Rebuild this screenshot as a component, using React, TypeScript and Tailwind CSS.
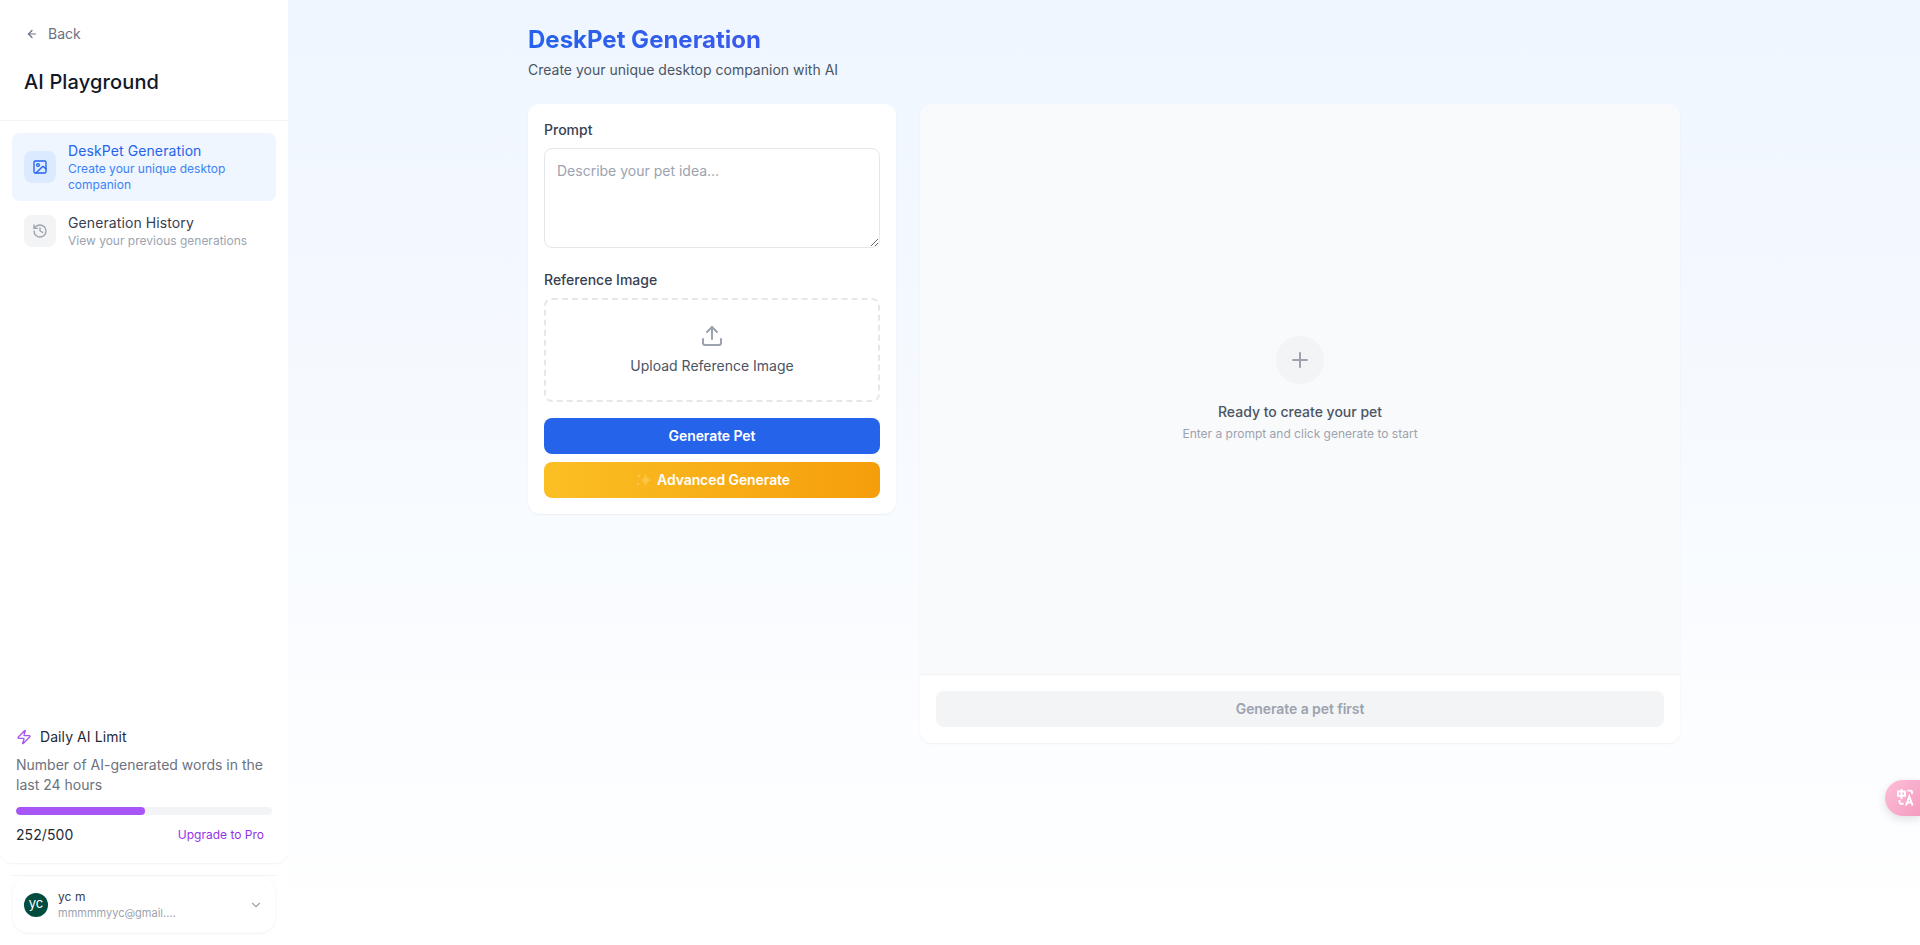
import React from "react";
import { ArrowLeft, ChevronDown, History, Image, Plus, Upload, Zap } from "lucide-react";

const navItems = [
  {
    title: "DeskPet Generation",
    text: "Create your unique desktop companion",
    icon: Image,
    active: true,
  },
  {
    title: "Generation History",
    text: "View your previous generations",
    icon: History,
    active: false,
  },
];

function Sidebar() {
  return (
    <aside className="flex w-72 shrink-0 flex-col bg-white">
      <header className="border-b border-gray-100 px-6 pt-6 pb-6">
        <button className="flex items-center gap-2 text-sm text-gray-500">
          <span className="flex size-4 items-center justify-center">
            <ArrowLeft size={12} strokeWidth={2.4} />
          </span>
          Back
        </button>
        <h2 className="mt-6 text-xl leading-7 font-medium tracking-[0.14px] text-[#111827]">AI Playground</h2>
      </header>
      <nav className="flex flex-1 flex-col gap-1 p-3">
        {navItems.map(({ title, text, icon: Icon, active }) => (
          <a
            key={title}
            className={active ? "flex items-center gap-3 rounded-lg bg-[#eff6ff] px-3 py-2" : "flex items-center gap-3 rounded-lg px-3 py-2"}
          >
            <span
              className={
                active
                  ? "flex size-8 shrink-0 items-center justify-center rounded-lg bg-[#dbeafe] text-[#2563eb]"
                  : "flex size-8 shrink-0 items-center justify-center rounded-lg bg-gray-100 text-[#9ca3af]"
              }
            >
              <Icon size={16} />
            </span>
            <span className="flex flex-col">
              <span className={active ? "text-sm tracking-[0.1px] text-[#2563eb]" : "text-sm tracking-[0.1px] text-[#374151]"}>{title}</span>
              <span className={active ? "text-xs text-[#3b82f6]" : "text-xs text-[#9ca3af]"}>{text}</span>
            </span>
          </a>
        ))}
      </nav>
      <section className="rounded-xl bg-white px-4 pb-3 shadow-[0_1px_2px_rgba(0,0,0,0.05)]">
        <div className="flex items-center gap-2 text-sm tracking-[0.08px] text-[#1f2937]">
          <Zap size={16} className="text-[#a855f7]" />
          Daily AI Limit
        </div>
        <p className="mt-2 text-sm text-[#6b7280]">Number of AI-generated words in the last 24 hours</p>
        <div className="mt-3 h-2 overflow-hidden rounded-full bg-gray-100">
          <div className="h-full w-[50.4%] rounded-full bg-[#a855f7]" />
        </div>
        <div className="mt-1 flex h-8 items-center justify-between">
          <span className="text-sm tracking-[0.08px] text-[#1f2937]">252/500</span>
          <button className="px-2 text-xs text-[#9333ea]">Upgrade to Pro</button>
        </div>
      </section>
      <footer className="mx-3 mt-3 mb-3 border-t border-gray-100">
        <button className="flex h-[57px] w-full items-center gap-2.5 rounded-2xl border border-gray-50 px-[11px] text-left shadow-[0_1px_2px_rgba(0,0,0,0.05)]">
          <span className="flex size-6 items-center justify-center rounded-full bg-[#004d40] pb-[3px] text-[13px] leading-none text-white">yc</span>
          <span className="flex flex-1 flex-col">
            <span className="text-xs tracking-[0.08px] text-[#374151]">yc m</span>
            <span className="text-[11px] leading-4 text-[#9ca3af]">mmmmmyyc@gmail....</span>
          </span>
          <ChevronDown size={14} className="mr-[1px] text-[#9ca3af]" />
        </button>
      </footer>
    </aside>
  );
}

function SparkleIcon() {
  return (
    <svg width="15" height="14" viewBox="0 0 15 14" fill="#fcc84c" fillOpacity="0.85">
      <path d="M9.500 0.500Q10.500 6 15 7Q10.500 8 9.500 13.500Q8.500 8 4 7Q8.500 6 9.500 0.500Z" />
      <path d="M3 0.500Q3.300 2.500 5 3Q3.300 3.500 3 5.500Q2.700 3.500 1 3Q2.700 2.500 3 0.500Z" />
      <path d="M2.200 8.500Q2.500 10.500 4.200 10.800Q2.500 11.200 2.200 13Q1.900 11.200 0.200 10.800Q1.900 10.500 2.200 8.500Z" />
    </svg>
  );
}

function PromptCard() {
  return (
    <section className="rounded-xl bg-white p-4 shadow-[0_1px_2px_rgba(0,0,0,0.05)]">
      <label className="mb-2 block text-sm font-medium text-[#374151]">Prompt</label>
      <textarea
        className="block h-[100px] w-full resize rounded-lg border border-gray-200 p-3 text-sm placeholder:text-[#9ca3af]"
        placeholder="Describe your pet idea..."
      />
      <p className="mt-[22px] mb-2 text-sm font-medium text-[#374151]">Reference Image</p>
      <div className="flex flex-col items-center gap-2 rounded-lg border-2 border-dashed border-gray-200 p-6">
        <Upload size={24} className="text-[#9ca3af]" />
        <span className="text-sm text-[#4b5563]">Upload Reference Image</span>
      </div>
      <button className="mt-4 flex h-9 w-full items-center justify-center rounded-lg bg-[#2563eb] text-sm font-semibold tracking-[-0.08px] text-white">
        Generate Pet
      </button>
      <button className="mt-2 flex h-9 w-full items-center justify-center gap-1.5 rounded-lg bg-[linear-gradient(to_right,#fbbf24,#f59e0b)] pl-[2px] text-sm font-semibold tracking-[-0.08px] text-white">
        <SparkleIcon />
        Advanced Generate
      </button>
    </section>
  );
}

function PreviewCard() {
  return (
    <section className="col-span-2 flex flex-col overflow-hidden rounded-xl bg-white shadow-[0_1px_2px_rgba(0,0,0,0.05)]">
      <div className="flex h-[570px] flex-col items-center justify-center bg-[#f9fafb]">
        <span className="flex size-12 items-center justify-center rounded-full bg-gray-100">
          <Plus size={24} className="text-[#9ca3af]" />
        </span>
        <h3 className="mt-[18px] text-sm font-medium text-[#4b5563]">Ready to create your pet</h3>
        <p className="mt-1 text-xs text-[#9ca3af]">Enter a prompt and click generate to start</p>
      </div>
      <div className="border-t border-gray-100 p-4">
        <button className="flex h-9 w-full items-center justify-center rounded-lg bg-gray-100 text-sm font-semibold tracking-[-0.08px] text-[#9ca3af]">
          Generate a pet first
        </button>
      </div>
    </section>
  );
}

function TranslateIcon() {
  return (
    <svg width="17" height="17" viewBox="0 0 17 17" fill="none" stroke="white" strokeWidth="1.9" className="shrink-0">
      <path d="M1 2.500h7v4.200H1zM4.500 0v10" />
      <path d="M10.500 1.600h3q1.500 0 1.500 1.500V5M2.500 11v2.200q0 1.500 1.500 1.500h2.500" />
      <path d="M9 16.500l3.300-9 3.300 9M10 13.500h4.600" />
    </svg>
  );
}

export default function App() {
  return (
    <div className="flex h-[945px] w-full overflow-hidden bg-white font-[Inter,sans-serif]">
      <Sidebar />
      <main className="relative flex-1 bg-[linear-gradient(to_bottom,#eff6ff,#ffffff)]">
        <div className="mx-auto w-[1152px] pt-6">
          <h1 className="bg-[linear-gradient(to_right,#2563eb,#9333ea)] bg-clip-text text-2xl font-bold text-transparent">DeskPet Generation</h1>
          <p className="mt-1 text-sm text-[#4b5563]">Create your unique desktop companion with AI</p>
          <div className="mt-6 grid grid-cols-3 items-start gap-6">
            <PromptCard />
            <PreviewCard />
          </div>
        </div>
        <button className="absolute top-[780px] right-0 flex h-9 w-[35px] items-center rounded-l-full bg-linear-to-br from-[#fcbfd8] to-[#f59bc0] pb-[1px] pl-[12px] shadow-[0_3px_10px_rgba(0,0,0,0.12)]">
          <TranslateIcon />
        </button>
      </main>
    </div>
  );
}
